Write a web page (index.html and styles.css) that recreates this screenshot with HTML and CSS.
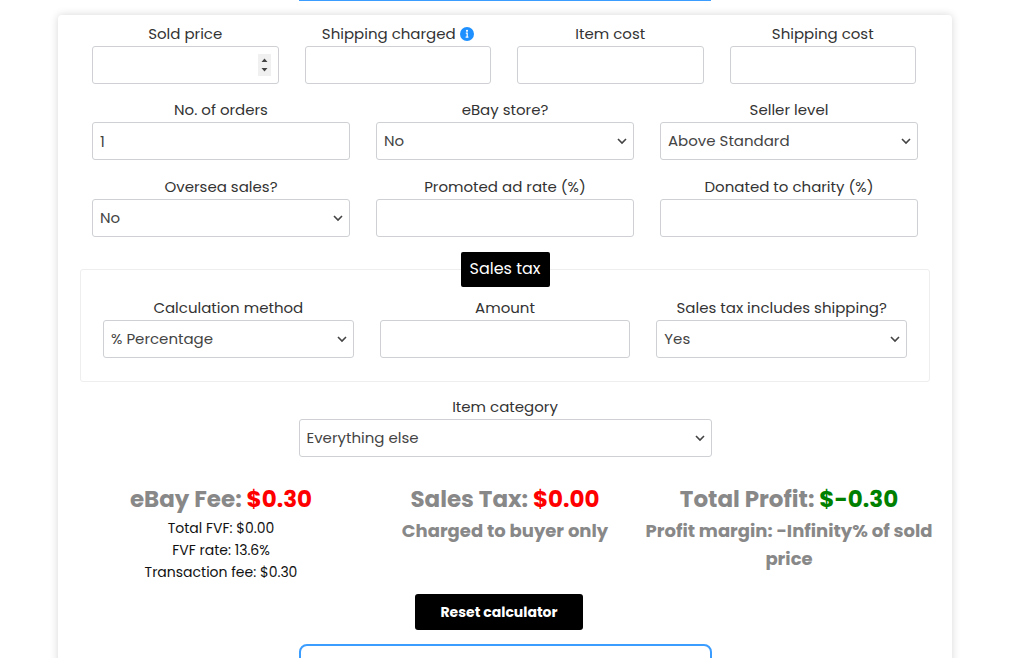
FILE: index.html
```
<!DOCTYPE html>
<html lang="en">
<head>
    <meta charset="UTF-8">
    <meta name="viewport" content="width=device-width, initial-scale=1.0">
    <title>eBay Fee Calculator</title>
    <link rel="stylesheet" href="styles.css">
</head>
<body>
    <div class="top-box"></div>

    <form class="calculator">
        <div class="row four">
            <div class="field">
                <label for="soldPrice">Sold price</label>
                <input type="number" id="soldPrice" class="spinner">
            </div>
            <div class="field">
                <label for="shippingCharged">Shipping charged
                    <svg class="info" viewBox="0 0 14 14" aria-hidden="true">
                        <circle cx="7" cy="7" r="7" fill="#1e90ff"/>
                        <circle cx="7" cy="3.8" r="1.1" fill="#fff"/>
                        <path d="M5.8 6.2h1.4v4M5.6 10.2h2.8" fill="none" stroke="#fff" stroke-width="1.2"/>
                    </svg>
                </label>
                <input type="number" id="shippingCharged">
            </div>
            <div class="field">
                <label for="itemCost">Item cost</label>
                <input type="number" id="itemCost">
            </div>
            <div class="field">
                <label for="shippingCost">Shipping cost</label>
                <input type="number" id="shippingCost">
            </div>
        </div>

        <div class="row">
            <div class="field">
                <label for="orders">No. of orders</label>
                <input type="number" id="orders" value="1">
            </div>
            <div class="field">
                <label for="store">eBay store?</label>
                <select id="store"><option>No</option></select>
            </div>
            <div class="field">
                <label for="level">Seller level</label>
                <select id="level"><option>Above Standard</option></select>
            </div>
        </div>

        <div class="row">
            <div class="field">
                <label for="oversea">Oversea sales?</label>
                <select id="oversea"><option>No</option></select>
            </div>
            <div class="field">
                <label for="adRate">Promoted ad rate (%)</label>
                <input type="number" id="adRate">
            </div>
            <div class="field">
                <label for="charity">Donated to charity (%)</label>
                <input type="number" id="charity">
            </div>
        </div>

        <fieldset class="tax">
            <legend>Sales tax</legend>
            <div class="row">
                <div class="field">
                    <label for="method">Calculation method</label>
                    <select id="method"><option>% Percentage</option></select>
                </div>
                <div class="field">
                    <label for="amount">Amount</label>
                    <input type="number" id="amount">
                </div>
                <div class="field">
                    <label for="includes">Sales tax includes shipping?</label>
                    <select id="includes"><option>Yes</option></select>
                </div>
            </div>
        </fieldset>

        <div class="field category">
            <label for="category">Item category</label>
            <select id="category"><option>Everything else</option></select>
        </div>

        <div class="results">
            <div class="result">
                <h2>eBay Fee: <span class="red">$0.30</span></h2>
                <p>Total FVF: $0.00</p>
                <p>FVF rate: 13.6%</p>
                <p>Transaction fee: $0.30</p>
            </div>
            <div class="result">
                <h2>Sales Tax: <span class="red">$0.00</span></h2>
                <h3>Charged to buyer only</h3>
            </div>
            <div class="result">
                <h2>Total Profit: <span class="green">$-0.30</span></h2>
                <h3>Profit margin: -Infinity% of sold price</h3>
            </div>
        </div>

        <div class="actions">
            <button type="reset">Reset calculator</button>
        </div>

        <div class="bottom-box"></div>
    </form>
</body>
</html>
```

FILE: styles.css
```
* {
    box-sizing: border-box;
}

body {
    margin: 0;
    padding: 0 72px 0 58px;
    background: white;
    color: #333;
    font-family: Poppins, Inter, "Open Sans", sans-serif;
    font-size: 15px;
    line-height: 24px;
}

.top-box {
    width: 46%;
    height: 1px;
    margin: 0 auto 14px;
    background: #3b9dff;
}

.calculator {
    padding: 7px 34px 20px;
    border-radius: 4px;
    box-shadow: 0 0 8px rgba(0, 0, 0, 0.16);
}

.row {
    display: grid;
    grid-template-columns: repeat(3, 1fr);
    gap: 26px;
    margin-bottom: 15px;
}

.row.four {
    grid-template-columns: repeat(4, 1fr);
    margin-bottom: 14px;
    padding-right: 2px;
}

.field {
    min-width: 0;
    text-align: center;
}

label {
    display: block;
    white-space: nowrap;
}

.info {
    width: 14px;
    height: 14px;
    vertical-align: -2px;
}

input,
select {
    display: block;
    width: 100%;
    height: 38px;
    padding: 0 7px;
    border: 1px solid #ced0d4;
    border-radius: 3px;
    background: white;
    color: #444;
    font: inherit;
}

input {
    appearance: textfield;
}

input.spinner {
    appearance: auto;
}

.spinner::-webkit-inner-spin-button {
    appearance: none;
    width: 13px;
    height: 22px;
    opacity: 1;
    background: #f0f0f0 url("data:image/svg+xml,%3Csvg xmlns='http://www.w3.org/2000/svg' width='13' height='22'%3E%3Cpath d='M3.5 8l3-3.5 3 3.5zM3.5 14l3 3.5 3-3.5z' fill='%23444'/%3E%3C/svg%3E") no-repeat center;
}

select {
    appearance: none;
    background: white url("data:image/svg+xml,%3Csvg xmlns='http://www.w3.org/2000/svg' width='10' height='7'%3E%3Cpath d='M1 1l4 4 4-4' fill='none' stroke='%23444' stroke-width='1.6'/%3E%3C/svg%3E") no-repeat right 6px center;
}

.tax {
    min-width: 0;
    margin: 0 -12px 13px;
    padding: 9px 22px 23px;
    border: 1px solid #eee;
    border-radius: 3px;
}

.tax legend {
    margin: 0 auto;
    padding: 5px 9px 6px;
    border-radius: 2px;
    background: black;
    color: white;
    font-size: 16px;
}

.tax .row {
    margin-bottom: 0;
}

.category {
    width: 50%;
    margin: 0 auto 24px;
}

.results {
    display: grid;
    grid-template-columns: repeat(3, 1fr);
    margin: 0 -13px 11px;
    text-align: center;
}

h2,
h3,
p {
    margin: 0;
}

h2 {
    color: #888;
    font-size: 23px;
    line-height: 36px;
}

h3 {
    margin: 0 -4px;
    color: #888;
    font-size: 18px;
    line-height: 28px;
}

p {
    color: #111;
    font-size: 14px;
    line-height: 22px;
}

.red {
    color: red;
}

.green {
    color: green;
}

.actions {
    padding-right: 12px;
    text-align: center;
}

button {
    display: inline-block;
    height: 36px;
    padding: 0 25px;
    border: 0;
    border-radius: 3px;
    background: black;
    color: white;
    font: inherit;
    font-size: 14px;
    font-weight: bold;
    vertical-align: top;
}

.bottom-box {
    width: 50%;
    height: 60px;
    margin: 14px auto 0;
    border: 2px solid #3b9dff;
    border-radius: 8px;
}
```
